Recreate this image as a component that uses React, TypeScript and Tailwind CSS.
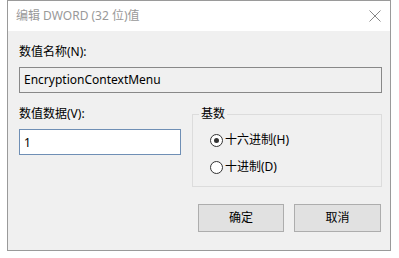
import { useState } from "react";

const FONT = "font-['Noto_Sans','Noto_Sans_CJK_SC',sans-serif]";

function Radio({ checked, label, onSelect }: { checked: boolean; label: string; onSelect: () => void }) {
  return (
    <button type="button" onClick={onSelect} className="flex items-center h-[16px] text-left">
      <span className="w-[13px] h-[13px] rounded-full border border-[#333] bg-white flex items-center justify-center">
        {checked && <span className="w-[5px] h-[5px] rounded-full bg-[#333]" />}
      </span>
      <span className="ml-[2px]">{label}</span>
    </button>
  );
}

export default function App() {
  const [hex, setHex] = useState(true);
  const [value, setValue] = useState("1");

  return (
    <div className={`w-[399px] h-[258px] bg-white pl-[7px] text-[12px] leading-[16px] text-black ${FONT}`}>
      <div className="w-[384px] h-[251px] border border-[#9a9a9a] flex flex-col bg-[#f0f0f0]">
        {/* Title bar */}
        <div className="h-[30px] bg-white flex items-center pl-[8px] pr-[9px]">
          <span className="flex-1 text-[#999]">编辑 DWORD (32 位)值</span>
          <svg width="12" height="12" viewBox="0 0 12 12" className="text-[#888]">
            <path d="M0.5 0.5 L11.5 11.5 M11.5 0.5 L0.5 11.5" stroke="currentColor" strokeWidth="1" />
          </svg>
        </div>

        {/* Body */}
        <div className="flex-1 pl-[11px] pr-[8px] pt-[13px]">
          <div>数值名称(N):</div>
          <div className="mt-[7px] h-[26px] border border-[#888] bg-[#f0f0f0] flex items-center pl-[4px]">
            EncryptionContextMenu
          </div>

          <div className="mt-[13px] flex gap-[11px]">
            <div className="w-[162px]">
              <div>数值数据(V):</div>
              <input
                value={value}
                onChange={(e) => setValue(e.target.value)}
                className="mt-[7px] w-full h-[26px] border border-[#6f8fb5] bg-white pl-[4px] outline-none"
              />
            </div>

            <fieldset className="flex-1 h-[81px] border border-[#dcdcdc] pl-[6px] pb-0">
              <legend className="px-[2px]">基数</legend>
              <div className="pl-[11px] pt-[10px] flex flex-col gap-[11px]">
                <Radio checked={hex} label="十六进制(H)" onSelect={() => setHex(true)} />
                <Radio checked={!hex} label="十进制(D)" onSelect={() => setHex(false)} />
              </div>
            </fieldset>
          </div>

          <div className="mt-[17px] flex justify-end gap-[10px] pr-[1px]">
            <button className="w-[86px] h-[28px] bg-[#e1e1e1] border border-[#adadad]">确定</button>
            <button className="w-[87px] h-[28px] bg-[#e1e1e1] border border-[#adadad]">取消</button>
          </div>
        </div>
      </div>
    </div>
  );
}
